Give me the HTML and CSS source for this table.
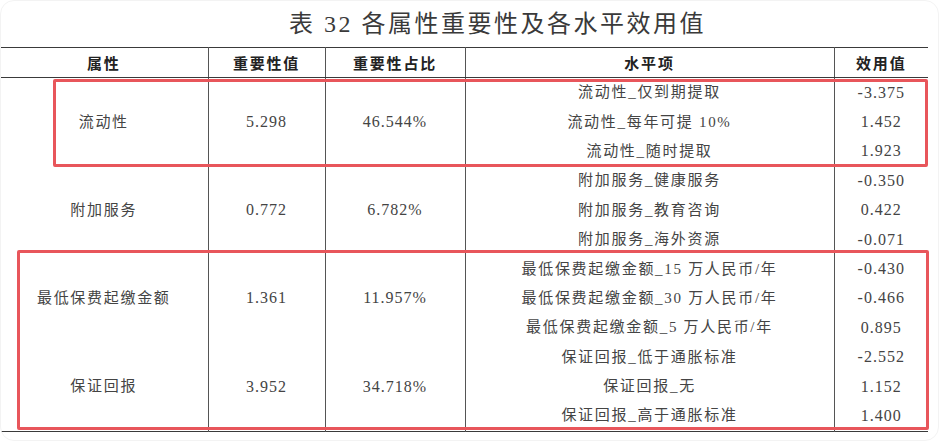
FILE: index.html
```html
<!DOCTYPE html>
<html lang="zh-CN">
<head>
<meta charset="utf-8">
<title>表 32 各属性重要性及各水平效用值</title>
<link rel="stylesheet" href="styles.css">
</head>
<body>
<div class="page">
  <div class="title">表 32 各属性重要性及各水平效用值</div>
  <table class="tbl">
    <colgroup>
      <col class="c1"><col class="c2"><col class="c3"><col class="c4"><col class="c5">
    </colgroup>
    <thead>
      <tr>
        <th>属性</th>
        <th class="vl">重要性值</th>
        <th class="vl">重要性占比</th>
        <th class="vl">水平项</th>
        <th class="vl">效用值</th>
      </tr>
    </thead>
    <tbody>
      <tr>
        <td rowspan="3">流动性</td>
        <td rowspan="3" class="vl num">5.298</td>
        <td rowspan="3" class="vl num">46.544%</td>
        <td class="vl">流动性_仅到期提取</td>
        <td class="vl num">-3.375</td>
      </tr>
      <tr><td class="vl">流动性_每年可提 10%</td><td class="vl num">1.452</td></tr>
      <tr><td class="vl">流动性_随时提取</td><td class="vl num">1.923</td></tr>
      <tr>
        <td rowspan="3">附加服务</td>
        <td rowspan="3" class="vl num">0.772</td>
        <td rowspan="3" class="vl num">6.782%</td>
        <td class="vl">附加服务_健康服务</td>
        <td class="vl num">-0.350</td>
      </tr>
      <tr><td class="vl">附加服务_教育咨询</td><td class="vl num">0.422</td></tr>
      <tr><td class="vl">附加服务_海外资源</td><td class="vl num">-0.071</td></tr>
      <tr>
        <td rowspan="3">最低保费起缴金额</td>
        <td rowspan="3" class="vl num">1.361</td>
        <td rowspan="3" class="vl num">11.957%</td>
        <td class="vl">最低保费起缴金额_15 万人民币/年</td>
        <td class="vl num">-0.430</td>
      </tr>
      <tr><td class="vl">最低保费起缴金额_30 万人民币/年</td><td class="vl num">-0.466</td></tr>
      <tr><td class="vl">最低保费起缴金额_5 万人民币/年</td><td class="vl num">0.895</td></tr>
      <tr>
        <td rowspan="3">保证回报</td>
        <td rowspan="3" class="vl num">3.952</td>
        <td rowspan="3" class="vl num">34.718%</td>
        <td class="vl">保证回报_低于通胀标准</td>
        <td class="vl num">-2.552</td>
      </tr>
      <tr><td class="vl">保证回报_无</td><td class="vl num">1.152</td></tr>
      <tr><td class="vl">保证回报_高于通胀标准</td><td class="vl num">1.400</td></tr>
    </tbody>
  </table>
  <div class="mark mark-a"></div>
  <div class="mark mark-b"></div>
</div>
</body>
</html>
```

FILE: styles.css
```css
html, body {
  margin: 0;
  padding: 0;
  background: #ffffff;
}

.page {
  position: relative;
  width: 939px;
  height: 441px;
  box-sizing: border-box;
  border: 1px solid #f3f3f3;
  border-radius: 14px;
  overflow: hidden;
  font-family: "Liberation Serif", "Noto Sans CJK SC", serif;
  color: #444;
}

.title {
  height: 46px;
  box-sizing: border-box;
  padding: 0 0 6px 56px;
  display: flex;
  align-items: center;
  justify-content: center;
  font-family: "Liberation Serif", "Noto Sans CJK SC", serif;
  font-size: 24px;
  letter-spacing: 2.5px;
  color: #3a3a3a;
}

.tbl {
  width: 928px;
  margin-left: -1px;
  border-collapse: collapse;
  table-layout: fixed;
  border-top: 1px solid #3a3a3a;
  border-bottom: 1px solid #3a3a3a;
}

.c1 { width: 208px; }
.c2 { width: 117px; }
.c3 { width: 140px; }
.c4 { width: 369px; }
.c5 { width: 94px; }

.tbl th {
  height: 29px;
  padding: 0;
  font-family: "Noto Sans CJK SC", sans-serif;
  font-weight: bold;
  font-size: 15px;
  letter-spacing: 1.8px;
  color: #222;
  text-align: center;
  border-bottom: 1px solid #3a3a3a;
}

.tbl td {
  height: 29.4px;
  padding: 0;
  font-size: 15px;
  letter-spacing: 1.7px;
  text-align: center;
  vertical-align: middle;
  white-space: nowrap;
  line-height: 1;
}

.tbl td.num {
  font-size: 16px;
  letter-spacing: 1px;
}

.tbl .vl {
  border-left: 1px solid #555;
}

.mark {
  position: absolute;
  box-sizing: border-box;
  border: 3px solid #e8565b;
  border-radius: 2px;
}

.mark-a {
  left: 52px;
  top: 78px;
  width: 875px;
  height: 88px;
}

.mark-b {
  left: 16px;
  top: 249px;
  width: 912px;
  height: 180px;
}
```
